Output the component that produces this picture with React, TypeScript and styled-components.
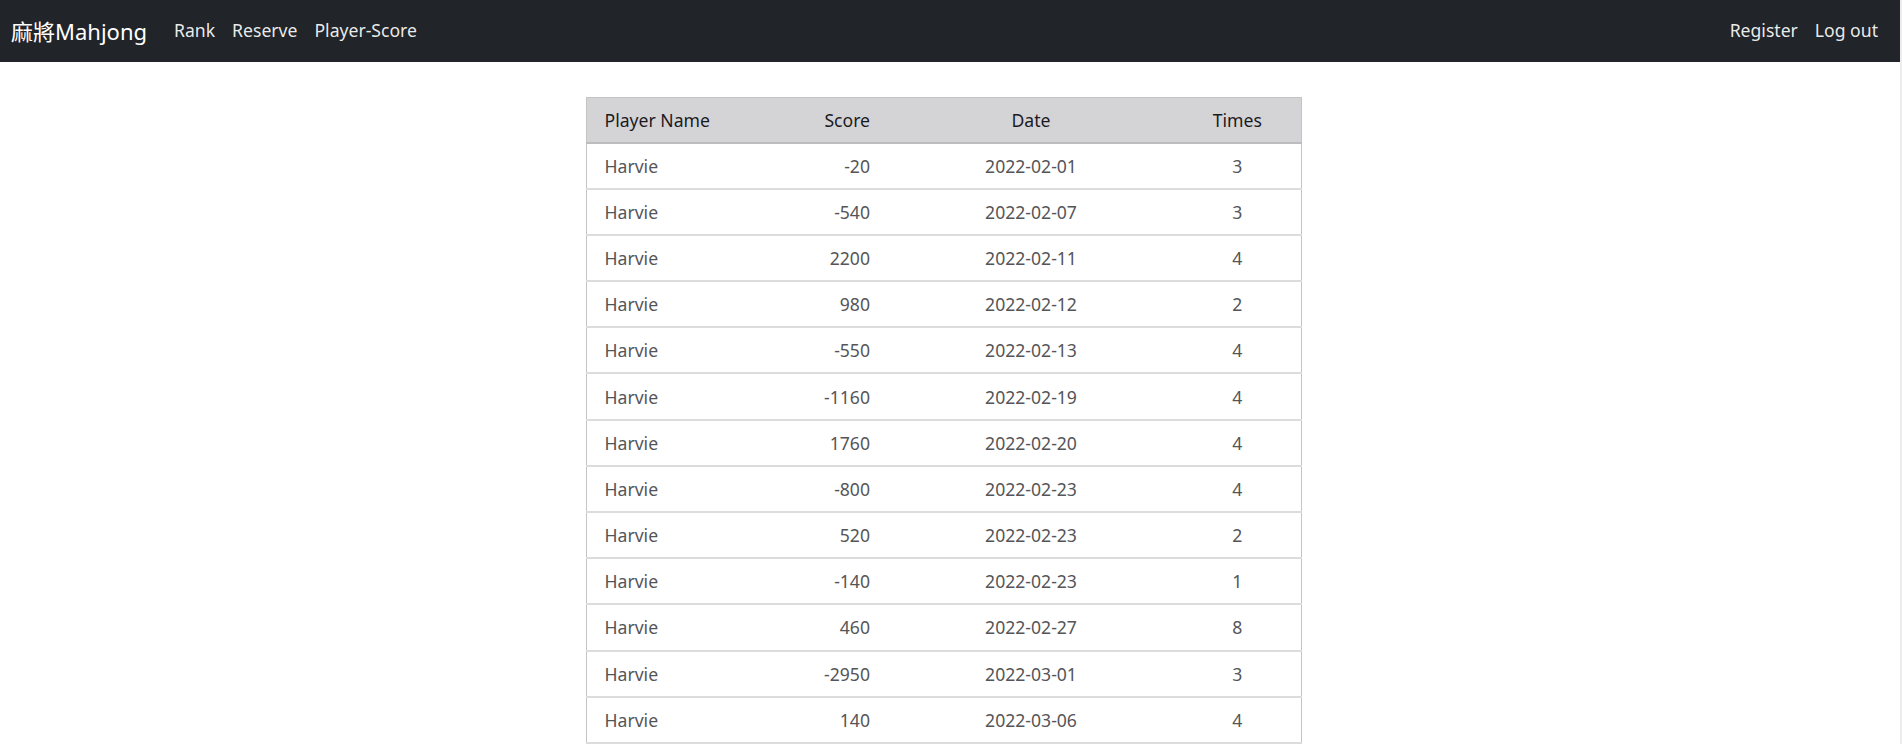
import React from "react";
import styled, { createGlobalStyle } from "styled-components";

const GlobalStyle = createGlobalStyle`
  html, body { margin: 0; padding: 0; background: #ffffff; }
  body {
    font-family: "Segoe UI", "Noto Sans", "Open Sans", "Noto Sans CJK TC", sans-serif;
    font-size: 17.6px;
    color: #212529;
  }
  * { box-sizing: border-box; }
`;

const Page = styled.div`
  min-height: 744px;
  border-right: 2px solid #ececec;
`;

const NavBar = styled.nav`
  height: 62px;
  background: #212529;
  display: flex;
  align-items: center;
  padding: 0 22px 0 11px;
`;

const Brand = styled.a`
  font-family: "Noto Sans", "Noto Sans CJK TC", sans-serif;
  font-size: 22px;
  color: #ffffff;
  text-decoration: none;
  margin-right: 27px;
  margin-top: -2px;
`;

const NavGroup = styled.div<{ $end?: boolean }>`
  display: flex;
  align-items: center;
  gap: 17px;
  margin-left: ${(p) => (p.$end ? "auto" : "0")};
`;

const NavLink = styled.a`
  font-size: 17.6px;
  color: rgba(255, 255, 255, 0.92);
  text-decoration: none;
  margin-top: -2px;
`;

const Main = styled.main`
  display: flex;
  justify-content: center;
  padding: 35px 13px 0 0;
`;

const Table = styled.table`
  width: 715px;
  table-layout: fixed;
  border-collapse: collapse;
  border: 1px solid #c4c4c4;
`;

const HeadRow = styled.tr`
  background: #d4d4d7;
  border-bottom: 2px solid #bdbdc0;
`;

const Row = styled.tr`
  border-bottom: 2px solid #dcdcdc;
  background: #ffffff;
`;

type Align = "left" | "right" | "center";

const Th = styled.th<{ $align: Align }>`
  height: 45px;
  padding: 0 18px;
  font-weight: 400;
  color: #1b1b1f;
  text-align: ${(p) => p.$align};
`;

const Td = styled.td<{ $align: Align }>`
  height: 46.2px;
  padding: 0 18px;
  color: #555557;
  text-align: ${(p) => p.$align};
`;

const rows: [string, number, string, number][] = [
  ["Harvie", -20, "2022-02-01", 3],
  ["Harvie", -540, "2022-02-07", 3],
  ["Harvie", 2200, "2022-02-11", 4],
  ["Harvie", 980, "2022-02-12", 2],
  ["Harvie", -550, "2022-02-13", 4],
  ["Harvie", -1160, "2022-02-19", 4],
  ["Harvie", 1760, "2022-02-20", 4],
  ["Harvie", -800, "2022-02-23", 4],
  ["Harvie", 520, "2022-02-23", 2],
  ["Harvie", -140, "2022-02-23", 1],
  ["Harvie", 460, "2022-02-27", 8],
  ["Harvie", -2950, "2022-03-01", 3],
  ["Harvie", 140, "2022-03-06", 4],
];

export default function App() {
  return (
    <Page>
      <GlobalStyle />
      <NavBar>
        <Brand href="#">麻將Mahjong</Brand>
        <NavGroup>
          <NavLink href="#">Rank</NavLink>
          <NavLink href="#">Reserve</NavLink>
          <NavLink href="#">Player-Score</NavLink>
        </NavGroup>
        <NavGroup $end>
          <NavLink href="#">Register</NavLink>
          <NavLink href="#">Log out</NavLink>
        </NavGroup>
      </NavBar>
      <Main>
        <Table>
          <colgroup>
            <col style={{ width: 151 }} />
            <col style={{ width: 151 }} />
            <col style={{ width: 286 }} />
            <col style={{ width: 127 }} />
          </colgroup>
          <thead>
            <HeadRow>
              <Th $align="left">Player Name</Th>
              <Th $align="right">Score</Th>
              <Th $align="center">Date</Th>
              <Th $align="center">Times</Th>
            </HeadRow>
          </thead>
          <tbody>
            {rows.map((r, i) => (
              <Row key={i}>
                <Td $align="left">{r[0]}</Td>
                <Td $align="right">{r[1]}</Td>
                <Td $align="center">{r[2]}</Td>
                <Td $align="center">{r[3]}</Td>
              </Row>
            ))}
          </tbody>
        </Table>
      </Main>
    </Page>
  );
}
